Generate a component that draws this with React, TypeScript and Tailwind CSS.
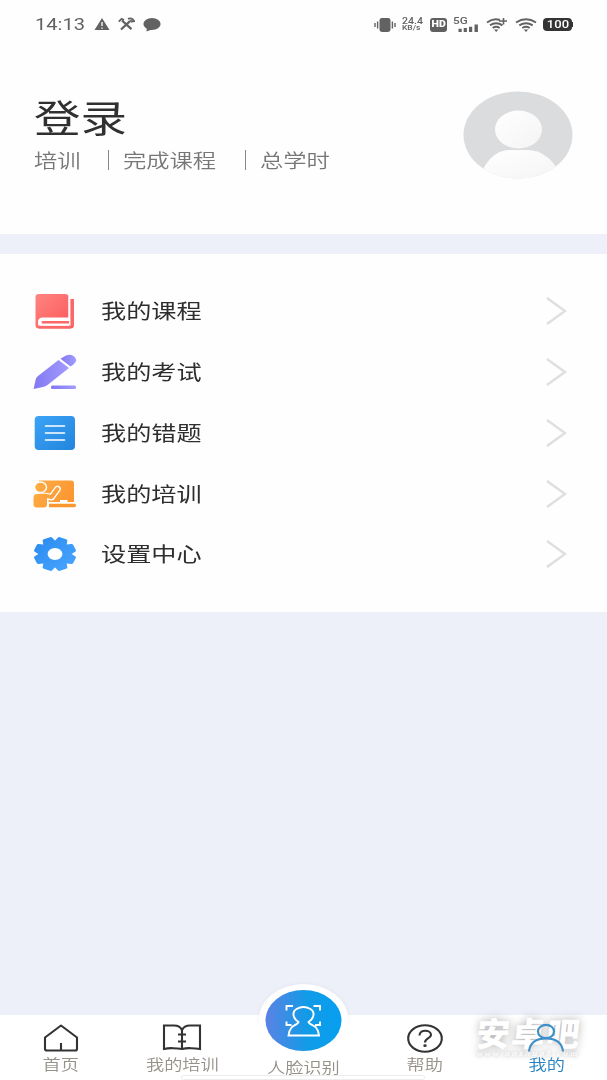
import type { ReactNode } from "react";

const CJK = "font-['Noto_Sans_CJK_SC','Noto_Sans',sans-serif]";

/* Text drawn wider than its natural proportions. */
function Wide({ children, className = "" }: { children: ReactNode; className?: string }) {
  return <span className={`inline-block whitespace-nowrap scale-x-[1.24] ${className}`}>{children}</span>;
}

function StatusBar() {
  return (
    <header className="flex h-[49px] items-center justify-between pl-[35px] pr-[34px] font-[Roboto,sans-serif] text-[#626262]">
      <div className="flex items-center">
        <span className="flex w-[59px] pt-[1px]">
          <Wide className="origin-left text-[16.2px] leading-none">14:13</Wide>
        </span>
        <svg className="h-[14px] w-[16px]" viewBox="0 0 16 14" fill="currentColor">
          <path d="M8 1 15.5 13H.5Z" />
          <path d="M8 5v4M8 10.4v1.4" stroke="#fff" strokeWidth="1.3" />
        </svg>
        <svg className="ml-[8px] h-[14px] w-[17px]" viewBox="0 0 17 14" fill="none" stroke="currentColor" strokeWidth="2.3">
          <path d="M4 3.5 13.5 12.2M3 12.5 12 4.2" />
          <path d="M.8 4.6 3.6 1.8 6 3.1M10 1.8C12.4.8 14.8 1.6 16.2 4.2L13.6 4.5 12.2 3.2" strokeWidth="1.8" />
        </svg>
        <svg className="ml-[8px] h-[15px] w-[18px]" viewBox="0 0 18 15" fill="currentColor">
          <ellipse cx="9" cy="7" rx="8.6" ry="6" />
          <path d="M4 11 3.4 14.4 9 12.5Z" />
        </svg>
      </div>
      <div className="flex items-center">
        <svg className="h-[16px] w-[22px]" viewBox="0 0 22 16" fill="none" stroke="currentColor">
          <rect x="5.5" y="1" width="11" height="14" rx="2.4" fill="currentColor" stroke="none" />
          <path d="M3.6 4.5v7M1 6v4M18.400 4.5v7M21 6v4" strokeWidth="1.4" />
        </svg>
        <div className="ml-[6px] flex w-[28px] flex-col text-[8.5px] leading-[7px]">
          <Wide className="origin-left self-start font-medium">24.4</Wide>
          <Wide className="origin-left self-start text-[6.8px] font-medium">KB/s</Wide>
        </div>
        <div className="flex h-[14px] w-[17px] items-center justify-center rounded-[3px] bg-[#606060] text-[8.5px] font-black leading-none text-white">
          <Wide>HD</Wide>
        </div>
        <div className="ml-[6px] flex h-[16px] w-[26px] flex-col">
          <Wide className="h-[7px] origin-left self-start text-[9.5px] font-medium leading-[8px]">5G</Wide>
          <svg className="h-[9px] w-[26px]" viewBox="0 0 26 9" fill="currentColor">
            <path d="M5.500 4.700h3.200V8H5.500zM10.700 4h3.200V8h-3.200zM16 2.700h3.200V8H16zM21.500.500h3.400V8h-3.400z" />
          </svg>
        </div>
        <svg className="ml-[7px] h-[16px] w-[23px]" viewBox="0 0 23 16" fill="none" stroke="currentColor" strokeWidth="2">
          <path d="M1 5.500Q7.500.5 14 3M4 8.300Q10 4 16.500 8.300M6.700 11Q10 8.600 13.700 11" />
          <path d="M8 12.500h4.400L10.200 15Z" fill="currentColor" stroke="none" />
          <path d="M13 4h8M17.500 1v6.500" strokeWidth="1.600" />
        </svg>
        <svg className="ml-[6px] h-[16px] w-[22px]" viewBox="0 0 22 16" fill="none" stroke="currentColor" strokeWidth="2">
          <path d="M1 5.500Q11-1 21 5.500M4.300 8.300Q11 4 17.700 8.300M7.300 11Q11 8.600 14.700 11" />
          <path d="M8.700 12.500h4.600L11 15Z" fill="currentColor" stroke="none" />
        </svg>
        <div className="ml-[6px] flex items-center">
          <div className="flex h-[13px] w-[29px] items-center justify-center rounded-[4px] bg-[#343434] pt-[1px] text-[10.500px] font-medium leading-none text-white">
            <Wide>100</Wide>
          </div>
          <span className="h-[5px] w-[1px] bg-[#343434]" />
        </div>
      </div>
    </header>
  );
}

function Avatar() {
  return (
    <svg className="-mt-[2px] h-[88px] w-[110px]" viewBox="0 0 110 88">
      <defs>
        <clipPath id="avatar">
          <ellipse cx="55" cy="44" rx="54.500" ry="43.500" />
        </clipPath>
        <linearGradient id="pale" x2="1" y2="1">
          <stop stopColor="#fff" />
          <stop offset="1" stopColor="#f4f4f5" />
        </linearGradient>
      </defs>
      <g clipPath="url(#avatar)">
        <rect width="110" height="88" fill="#dbdcde" />
        <ellipse cx="55.500" cy="38.500" rx="23.500" ry="19" fill="url(#pale)" />
        <path d="M18 82C26 65 36 59 47 59h18c13 0 24 9 30 20v12H18Z" fill="url(#pale)" />
      </g>
    </svg>
  );
}

const iconBox = "h-[40px] w-[44px]";

function BookIcon() {
  return (
    <svg className={iconBox} viewBox="0 0 44 40">
      <defs>
        <linearGradient id="red" x2="1" y2="1">
          <stop stopColor="#ff8580" />
          <stop offset="1" stopColor="#fa5558" />
        </linearGradient>
      </defs>
      <path d="M6 3h26q3.500 0 3.500 3v20.500H9Q5.500 27 5.500 31v4H37.500V8q3.500 0 3.500 2v24q0 3.500-4 3.500H6q-3.500 0-3.500-3.500V6Q2.500 3 6 3Z" fill="url(#red)" />
      <path d="M35.500 6h2v22.500h-2ZM5 31q0-4 4-4h26q2.700 0 2.700-2.500V36H9q-4 0-4-5Z" fill="#fff" />
      <path d="M8 31.500q0-1.500 2-1.500h26v2.500H8ZM6 34.500h32v3H6ZM37.500 8h3.500v27h-3.500Z" fill="#fb6869" />
      <path d="M8 31v3h28" stroke="#fff" strokeWidth="1.500" fill="none" />
    </svg>
  );
}

function PencilIcon() {
  return (
    <svg className={iconBox} viewBox="0 0 44 40">
      <defs>
        <linearGradient id="violet" x2="1">
          <stop stopColor="#8278f2" />
          <stop offset="1" stopColor="#a29bff" />
        </linearGradient>
      </defs>
      <g fill="url(#violet)">
        <path d="M25.500 8 36 16 14.500 33Q12.500 34.600 10 35L.6 37 2.800 27Q3.300 25.400 5 24Z" />
        <path d="M27.500 6.800 33 3.500Q38 1.200 41.700 5 45 9 40.500 12.500L37.500 14.500Z" />
        <rect x="18" y="33.600" width="25" height="3.400" rx="1.500" />
      </g>
    </svg>
  );
}

function ListIcon() {
  return (
    <svg className={iconBox} viewBox="0 0 44 40">
      <defs>
        <linearGradient id="blue" x2="1" y2="1">
          <stop stopColor="#3ca3f6" />
          <stop offset="1" stopColor="#2285dd" />
        </linearGradient>
      </defs>
      <rect x="1.700" y="3" width="40.300" height="34" rx="4" fill="url(#blue)" />
      <path d="M12.500 13h19M12.500 20h19M12.500 27h19" stroke="#fff" strokeWidth="1.600" strokeLinecap="round" />
    </svg>
  );
}

function TrainingIcon() {
  return (
    <svg className={iconBox} viewBox="0 0 44 40">
      <defs>
        <linearGradient id="orange" gradientUnits="userSpaceOnUse" x1="0" y1="6" x2="44" y2="34">
          <stop stopColor="#ffad45" />
          <stop offset="1" stopColor="#fa922d" />
        </linearGradient>
      </defs>
      <path d="M6 6.500h32q3 0 3 3v19H14V24L6 13Z" fill="url(#orange)" />
      <ellipse cx="7.500" cy="13.200" rx="6.700" ry="5.900" fill="#fff" />
      <g fill="none" strokeLinecap="round" strokeLinejoin="round">
        <path d="M6 22h7l5.500 1.200L24.500 15" stroke="#fff" strokeWidth="6.600" />
        <path d="M14 23v7" stroke="#fff" strokeWidth="3" />
        <path d="M6 21.800h7l5.500 1.300L24.500 15" stroke="url(#orange)" strokeWidth="4" />
      </g>
      <ellipse cx="7.500" cy="13.200" rx="5.200" ry="4.500" fill="url(#orange)" />
      <path d="M4 20h8l2 2V30q0 3.500-3 3.500H3.500Q.5 33.500.5 30V24Q.5 20 4 20Z" fill="url(#orange)" />
      <rect x="27" y="26" width="7.500" height="3" fill="#fff" />
      <path d="M15 28.700H43" stroke="#fff" strokeWidth="1.300" />
      <path d="M16 29.700h25.500q1.500 0 1.500 1.500T41.500 33.200H16Z" fill="#fa982f" />
    </svg>
  );
}

/* Eight teeth, each given by two outer and two inner corners. */
const gearPoints = Array.from({ length: 8 }, (_, i) => 22.5 + 45 * i)
  .flatMap((a) => [
    [12.600, a - 16.500],
    [15.800, a - 10],
    [15.800, a + 10],
    [12.600, a + 16.500],
    [11.400, a + 22.500],
  ])
  .map(([r, a]) => `${(r * Math.cos((a * Math.PI) / 180)).toFixed(2)},${(r * Math.sin((a * Math.PI) / 180)).toFixed(2)}`)
  .join(" ");

function GearIcon() {
  return (
    <svg className={iconBox} viewBox="0 0 44 40">
      <defs>
        <linearGradient id="gear" x2="1" y2="1">
          <stop stopColor="#2a8bef" />
          <stop offset="1" stopColor="#49a5ff" />
        </linearGradient>
      </defs>
      <g transform="translate(22 20) scale(1.24 1)">
        <polygon points={gearPoints} fill="url(#gear)" stroke="url(#gear)" strokeWidth="3" strokeLinejoin="round" />
        <circle r="6" fill="#fff" />
      </g>
    </svg>
  );
}

const menu = [
  { label: "我的课程", icon: <BookIcon /> },
  { label: "我的考试", icon: <PencilIcon /> },
  { label: "我的错题", icon: <ListIcon /> },
  { label: "我的培训", icon: <TrainingIcon /> },
  { label: "设置中心", icon: <GearIcon /> },
];

function MenuRow({ label, icon }: { label: string; icon: ReactNode }) {
  return (
    <li className="flex h-[60.750px] items-center">
      {icon}
      <Wide className="ml-[24px] origin-left pb-[1.500px] text-[20.300px] leading-none text-[#2e2e2e]">{label}</Wide>
      <svg className="ml-auto h-[28px] w-[22px]" viewBox="0 0 22 28" fill="none" stroke="#dfdfdf" strokeWidth="2.500">
        <path d="M2 1 20 14 2 27" />
      </svg>
    </li>
  );
}

function NavItem({ label, active = false, icon }: { label: string; active?: boolean; icon: ReactNode }) {
  return (
    <div className={`relative flex flex-1 flex-col items-center pt-[7px] ${active ? "text-[#2683c4]" : "text-[#969189]"}`}>
      {icon}
      <Wide className="mt-[2px] text-[14.700px] leading-[16px] font-[350]">{label}</Wide>
    </div>
  );
}

function BottomNav() {
  return (
    <nav className="relative flex h-[65px] bg-white">
      <div className="absolute left-[474px] top-[0px] flex w-[108px] flex-col items-center text-white">
        <span className="-skew-x-6 whitespace-nowrap pl-[2px] text-[33px] font-black leading-[34px] tracking-[2px] [text-shadow:0_0_8px_rgba(70,70,70,.42)]">安卓吧</span>
        <span className="whitespace-nowrap font-['Liberation_Serif',serif] text-[9px] font-bold italic leading-[8px] tracking-[2.200px] [text-shadow:0_0_4px_rgba(70,70,70,.5)]">www.anzhuo8.com</span>
      </div>
      <NavItem
        label="首页"
        icon={
          <svg className="h-[32px] w-[36px]" viewBox="0 0 36 32" fill="none" stroke="#333" strokeWidth="2.100" strokeLinejoin="round">
            <path d="M2 15.500 18 3.500 34 15.500V27q0 1.500-2 1.500H4q-2 0-2-1.500ZM18 21v7.500" />
          </svg>
        }
      />
      <NavItem
        label="我的培训"
        icon={
          <svg className="h-[32px] w-[40px]" viewBox="0 0 40 32" fill="none" stroke="#333" strokeWidth="2.100">
            <path d="M20 27V8Q18 3.500 12 3.500H2V27q4-1 9-.8T20 27q4-1 9-.8t9 .8V3.500H28Q22 3.500 20 8M16 12.500h8M16 19.500h8" />
          </svg>
        }
      />
      <div className="relative flex flex-1 flex-col items-center text-[#969189]">
        <svg className="-mt-[34px] h-[78px] w-[98px] shrink-0" viewBox="0 0 98 78">
          <defs>
            <linearGradient id="scan">
              <stop stopColor="#5b82e4" />
              <stop offset=".55" stopColor="#119be7" />
              <stop offset="1" stopColor="#079ff0" />
            </linearGradient>
            <filter id="halo" x="-10%" y="-10%" width="120%" height="120%">
              <feDropShadow dx="0" dy="0" stdDeviation="1.500" floodColor="#667" floodOpacity=".13" />
            </filter>
          </defs>
          <ellipse cx="48.500" cy="39" rx="45" ry="36" fill="#fff" filter="url(#halo)" />
          <rect y="42" width="98" height="36" fill="#fff" />
          <ellipse cx="48.500" cy="39.500" rx="38" ry="30.500" fill="url(#scan)" />
          <g fill="none" stroke="#fff" strokeWidth="1.900">
            <path d="M31.500 29.500v-4.500h6.500M58.500 25h6.500V29.500M31.500 40.500v3.500h5M60 44h5V40.500" />
            <path d="M43.500 41C38 37.500 36.500 31 41.500 28q7-4 14 0c5 3 3.500 9.500-2 13 0 2 5 3 7.500 5.500q2.500 3 3 8H33.500q.5-5 3-8c2.500-2.500 7-3.500 7-5.500Z" />
          </g>
        </svg>
        <Wide className="text-[14.700px] leading-[16px] font-[350]">人脸识别</Wide>
      </div>
      <NavItem
        label="帮助"
        icon={
          <svg className="h-[32px] w-[38px]" viewBox="0 0 38 32" fill="none" stroke="#333" strokeWidth="2.100">
            <ellipse cx="19" cy="16.500" rx="16.800" ry="13.200" />
            <path d="M13.500 13.500c0-6.500 11.500-6 11.500-.5 0 3.500-6 3-6 7.500" />
            <ellipse cx="19" cy="23.700" rx="1.700" ry="1.400" fill="#333" stroke="none" />
          </svg>
        }
      />
      <NavItem
        label="我的"
        active
        icon={
          <svg className="h-[32px] w-[38px]" viewBox="0 0 38 32" fill="none" stroke="#3f8fc9" strokeWidth="2.200">
            <ellipse cx="19" cy="9.500" rx="8" ry="6.700" />
            <path d="M2 29.500C3 20 10 16.500 19 16.500S35 20 36 29.500" />
          </svg>
        }
      />
      <div className="absolute left-[181px] top-[60px] h-[5px] w-[244px] rounded-full border border-[#ececec] bg-white" />
    </nav>
  );
}

export default function App() {
  return (
    <div className={`flex h-[1080px] w-[607px] flex-col overflow-hidden bg-[#edf0f9] ${CJK}`}>
      <section className="h-[234px] bg-[#fefefe]">
        <StatusBar />
        <div className="flex justify-between pl-[34px] pr-[34px] pt-[44px]">
          <div>
            <h1 className="mt-[4px] leading-none text-[#303030]">
              <Wide className="origin-left text-[37.500px] leading-[38px]">登录</Wide>
            </h1>
            <div className="mt-[9px] flex h-[32px] items-center text-[18.800px] font-[350] leading-none text-[#777]">
              <Wide className="w-[74px] shrink-0 origin-left">培训</Wide>
              <span className="h-[20px] w-px bg-[#888]" />
              <Wide className="ml-[14px] w-[122px] shrink-0 origin-left">完成课程</Wide>
              <span className="h-[20px] w-px bg-[#888]" />
              <Wide className="ml-[14px] origin-left">总学时</Wide>
            </div>
          </div>
          <Avatar />
        </div>
      </section>
      <ul className="mt-[20px] h-[357.500px] bg-[#fefefe] pl-[33px] pr-[40px] pt-[27px]">
        {menu.map((item) => (
          <MenuRow key={item.label} label={item.label} icon={item.icon} />
        ))}
      </ul>
      <main className="flex-1" />
      <BottomNav />
    </div>
  );
}
